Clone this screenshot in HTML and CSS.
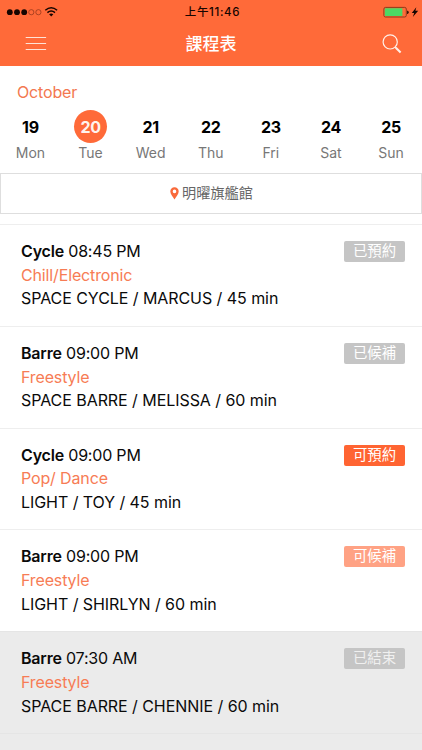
FILE: index.html
```html
<!DOCTYPE html>
<html lang="zh-Hant">
<head>
<meta charset="utf-8">
<title>課程表</title>
<link rel="stylesheet" href="styles.css">
</head>
<body>
<header class="header">
  <div class="status">
    <svg class="signal" width="60" height="22" viewBox="0 0 60 22">
      <g fill="#160500"><circle cx="9.8" cy="11.2" r="2.9"/><circle cx="17" cy="11.2" r="2.9"/><circle cx="24.2" cy="11.2" r="2.9"/></g>
      <g fill="none" stroke="#8b3218" stroke-width=".7"><circle cx="31.3" cy="11.2" r="2.6"/><circle cx="38.4" cy="11.2" r="2.6"/></g>
      <g fill="none" stroke="#160500" stroke-width="1.5"><path d="M45.3 9.3Q51.2 4.2 57.1 9.3"/><path d="M47.4 11.6Q51.2 8.3 55 11.6"/></g>
      <path d="M49.1 13.3Q51.2 11.6 53.3 13.3L51.2 15.5Z" fill="#160500"/>
    </svg>
    <span class="clock">上午11:46</span>
    <svg class="battery" width="40" height="22" viewBox="0 0 40 22">
      <rect x="1.9" y="6.4" width="22.4" height="9.6" rx="1.6" fill="none" stroke="#713014" stroke-width=".8"/>
      <rect x="2.8" y="7.3" width="17.6" height="7.8" rx=".7" fill="#4cd964"/>
      <path d="M25.2 9.7h.5q.9.3.9 1.6t-.9 1.6h-.5z" fill="#160500"/>
      <path d="M34.3 6.3L29.8 12h2.4L30.8 15.9l5.4-6.1h-2.8z" fill="#160500"/>
    </svg>
  </div>
  <div class="navbar">
    <svg class="menu" width="22" height="16" viewBox="0 0 22 16"><path d="M.7 1.5h20.4M.7 7.5h20.4M.7 13.5h20.4" stroke="#ffe3d7" stroke-width="1.2"/></svg>
    <h1 class="title">課程表</h1>
    <svg class="search" width="20" height="20" viewBox="0 0 20 20" fill="none" stroke="#fff0e9"><circle cx="8.2" cy="7.9" r="7.1" stroke-width="1.2"/><path d="M13.1 13l1.2 1.2" stroke-width="1.2"/><path d="M13.8 13.8l4.8 4.6" stroke-width="2.1"/></svg>
  </div>
</header>
<section class="calendar">
  <h2 class="month">October</h2>
  <div class="week">
    <div class="day"><b class="date">19</b><span>Mon</span></div>
    <div class="day"><b class="date selected">20</b><span>Tue</span></div>
    <div class="day"><b class="date">21</b><span>Wed</span></div>
    <div class="day"><b class="date">22</b><span>Thu</span></div>
    <div class="day"><b class="date">23</b><span>Fri</span></div>
    <div class="day"><b class="date">24</b><span>Sat</span></div>
    <div class="day"><b class="date">25</b><span>Sun</span></div>
  </div>
</section>
<div class="location">
  <svg width="9" height="13" viewBox="0 0 9 13"><path fill="#f96a3b" fill-rule="evenodd" d="M4.5.3A4.1 4.1 0 0 0 .3 4.5C.3 7.1 3 10 4.5 12.6 6 10 8.7 7.1 8.7 4.5A4.1 4.1 0 0 0 4.5.3ZM4.5 2.6a1.8 1.8 0 1 1 0 3.6 1.8 1.8 0 0 1 0-3.6Z"/></svg>
  <span>明曜旗艦館</span>
</div>
<main class="classes">
  <article class="class">
    <div class="info"><p class="time"><b>Cycle</b> 08:45 PM</p><p class="genre">Chill/Electronic</p><p>SPACE CYCLE / MARCUS / 45 min</p></div>
    <span class="tag">已預約</span>
  </article>
  <article class="class">
    <div class="info"><p class="time"><b>Barre</b> 09:00 PM</p><p class="genre">Freestyle</p><p>SPACE BARRE / MELISSA / 60 min</p></div>
    <span class="tag">已候補</span>
  </article>
  <article class="class">
    <div class="info"><p class="time"><b>Cycle</b> 09:00 PM</p><p class="genre">Pop/ Dance</p><p>LIGHT / TOY / 45 min</p></div>
    <span class="tag open">可預約</span>
  </article>
  <article class="class">
    <div class="info"><p class="time"><b>Barre</b> 09:00 PM</p><p class="genre">Freestyle</p><p>LIGHT / SHIRLYN / 60 min</p></div>
    <span class="tag waitlist">可候補</span>
  </article>
  <article class="class ended">
    <div class="info"><p class="time"><b>Barre</b> 07:30 AM</p><p class="genre">Freestyle</p><p>SPACE BARRE / CHENNIE / 60 min</p></div>
    <span class="tag">已結束</span>
  </article>
  <div class="next ended"></div>
</main>
</body>
</html>
```
FILE: styles.css
```css
* { box-sizing: border-box; }
body {
  margin: 0;
  height: 750px;
  display: flex;
  flex-direction: column;
  background: #fff;
  color: #0a0a0a;
  font-family: Inter, "Noto Sans CJK TC", sans-serif;
}
h1, h2, p { margin: 0; }
svg { display: block; flex: none; }
.header { flex: none; height: 66px; background: #ff6a39; }
.status {
  height: 22px;
  display: grid;
  grid-template-columns: 1fr auto 1fr;
  align-items: center;
}
.battery { justify-self: end; }
.clock {
  font-size: 11.5px;
  font-weight: 500;
  line-height: 22px;
  color: #160500;
  padding: 1px 0 0 3px;
  letter-spacing: 0.65px;
}
.navbar {
  height: 44px;
  display: grid;
  grid-template-columns: 1fr auto 1fr;
  align-items: center;
  padding: 0 20px 2px 25px;
}
.title { font-size: 17px; font-weight: 500; line-height: 42px; color: #fff; margin-right: 5px; padding-top: 1px; }
.search { justify-self: end; }
.calendar { flex: none; height: 107px; padding-top: 14px; }
.month { margin-left: 17px; font-size: 16px; line-height: 24px; font-weight: 400; color: #f37850; letter-spacing: -0.15px; }
.week { display: grid; grid-template-columns: repeat(7, 60.1px); margin: 6px 0 0 0.4px; }
.day {
  display: flex;
  flex-direction: column;
  align-items: center;
  font-size: 14px;
  line-height: 20px;
  color: #777;
}
.date {
  width: 33px;
  height: 33px;
  border-radius: 50%;
  display: grid;
  place-items: center;
  font-size: 16px;
  font-weight: 700;
  color: #000;
  letter-spacing: -0.3px;
}
.selected { background: #ff6a39; color: #fff3ee; }
.location {
  flex: none;
  height: 41px;
  border: 1px solid #dedede;
  display: flex;
  align-items: center;
  justify-content: center;
  gap: 3px;
  padding-left: 1px;
  padding-bottom: 1px;
  font-size: 14.2px;
  line-height: 20px;
  color: #666;
}
.classes { flex: none; margin-top: 10px; }
.class {
  height: 101.8px;
  border-top: 1px solid #eee;
  padding: 15px 17px 0 21px;
  display: flex;
  justify-content: space-between;
  align-items: flex-start;
}
.next { height: 17px; border-top: 1px solid #eee; }
.info { font-size: 16px; line-height: 23.7px; white-space: nowrap; letter-spacing: -0.06px; }
.info b { font-weight: 600; }
.info .time { letter-spacing: -0.2px; }
.info .genre { color: #f77c55; letter-spacing: -0.14px; }
.tag {
  width: 61px;
  height: 21px;
  margin-top: 1px;
  border-radius: 2px;
  background: #c5c5c5;
  color: #fff;
  font-size: 14.4px;
  line-height: 20px;
  text-align: center;
}
.open { background: #ff6432; }
.waitlist { background: #ffa284; }
.ended { background: #ebebeb; border-color: #e5e5e5; }
.ended .tag { color: #f0f0f0; }
```
